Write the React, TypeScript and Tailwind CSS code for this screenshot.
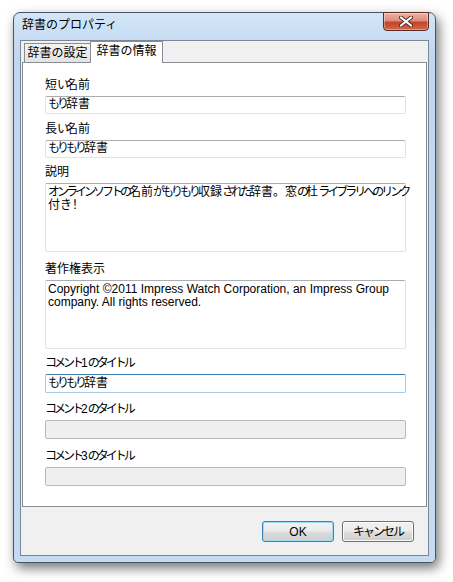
import React from 'react';

const jp = "font-['Liberation_Sans','Noto_Sans_CJK_JP',sans-serif]";

// kana are narrow in the original UI font, so squeeze each run of them
const Jp = ({ text, kana }: { text: string; kana: string }) => (
  <>
    {text
      .split(/([\u3040-\u30ff]+)/)
      .filter(Boolean)
      .map((part, i) =>
        /[\u3040-\u30ff]/.test(part) ? (
          <span key={i} className={kana}>
            {part}
          </span>
        ) : (
          <span key={i}>{part}</span>
        )
      )}
  </>
);

const Label = ({ text, className }: { text: string; className: string }) => (
  <div className={`${className} h-[15px] leading-[15px] text-[12px] text-black whitespace-nowrap`}>
    <Jp text={text} kana="tracking-[-3px]" />
  </div>
);

const TextBox = ({ value, state, className }: { value?: string; state: 'normal' | 'focused' | 'disabled'; className: string }) => {
  const look =
    state === 'focused'
      ? 'border-[#a6cae6] border-t-[#3d7bad] bg-white'
      : state === 'disabled'
      ? 'border-[#b7b9bc] bg-[#efefef]'
      : 'border-[#dfe2e7] border-t-[#abadb3] bg-white';
  return (
    <div className={`${className} mt-[3px] w-[361px] border rounded-[2px] ${look} pl-[2px] text-[12px] leading-[15px] text-black whitespace-nowrap`}>
      {value && <Jp text={value} kana="tracking-[-3px]" />}
    </div>
  );
};

const TextArea = ({ lines }: { lines: string[] }) => (
  <div className="mt-[3px] w-[361px] h-[69px] border rounded-[2px] border-[#dfe2e7] border-t-[#abadb3] bg-white px-[2px] pt-[2px] text-[12px] leading-[13px] text-black">
    {lines.map((l) => (
      <div key={l} className="whitespace-nowrap">
        <Jp text={l} kana="tracking-[-3px]" />
      </div>
    ))}
  </div>
);

const CloseButton = () => (
  <div className="w-[46px] h-[19px] -mt-px rounded-b-[4px] border border-[#5c2a22] bg-[linear-gradient(#eab3a6_0%,#dc8c78_45%,#c4432b_55%,#cf6a4a_100%)] flex items-center justify-center shadow-[inset_0_0_0_1px_rgba(255,255,255,0.35)]">
    <svg width="14" height="11" viewBox="0 0 14 11">
      <path d="M2 1.5 L12 9.5 M12 1.5 L2 9.5" stroke="#5a2a22" strokeWidth="4" strokeLinecap="round" />
      <path d="M2 1.5 L12 9.5 M12 1.5 L2 9.5" stroke="#ffffff" strokeWidth="2.2" strokeLinecap="round" />
    </svg>
  </div>
);

const Button = ({ text, primary }: { text: string; primary?: boolean }) => (
  <div
    className={`w-[72px] h-[21px] rounded-[3px] border flex items-center justify-center text-[12px] text-black bg-[linear-gradient(#f2f2f2_0%,#ebebeb_48%,#dddddd_52%,#cfcfcf_100%)] ${
      primary ? 'border-[#3c7fb1] shadow-[inset_0_0_0_1px_#9fdcf7]' : 'border-[#707070] shadow-[inset_0_0_0_1px_#fcfcfc]'
    }`}
  >
    <Jp text={text} kana="tracking-[-2px]" />
  </div>
);

export default function App() {
  return (
    <div className={`w-[453px] h-[582px] bg-white pt-[12px] pl-[13px] ${jp}`}>
      <div className="w-[423px] h-[551px] rounded-t-[7px] rounded-b-[5px] border border-[#4a5562] bg-[linear-gradient(#d3e5f8_0%,#bfd7f0_8%,#c3dbf3_100%)] shadow-[3px_5px_12px_rgba(0,0,0,0.55)] flex flex-col">
        {/* title bar */}
        <div className="h-[27px] flex items-start justify-between">
          <div className="pl-[8px] pt-[5px] text-[12px] leading-[15px] text-black">辞書のプロパティ</div>
          <div className="mr-[6px]">
            <CloseButton />
          </div>
        </div>

        {/* client area */}
        <div className="flex-1 ml-[6px] mr-[6px] mb-[6px] border border-[#7d8794] bg-[#f0f0f0] flex flex-col">
          <div className="ml-[1px] w-[405px] flex flex-col">
            {/* tabs */}
            <div className="h-[21px] flex items-end pl-[2px]">
              <div className="h-[19px] w-[67px] border border-b-0 border-[#898c95] bg-[linear-gradient(#f3f3f3,#e3e3e3)] text-[12px] leading-[18px] text-center text-black">
                辞書の設定
              </div>
              <div className="relative z-10 -mb-px h-[22px] w-[73px] -ml-px border border-b-0 border-[#898c95] bg-white text-[12px] leading-[18px] text-center text-black">
                辞書の情報
              </div>
            </div>

            {/* panel */}
            <div className="h-[445px] border border-[#898c95] bg-white pl-[22px]">
              <Label text="短い名前" className="mt-[15px]" />
              <TextBox value="もり辞書" state="normal" className="h-[18px]" />
              <Label text="長い名前" className="mt-[8px]" />
              <TextBox value="もりもり辞書" state="normal" className="h-[18px]" />
              <Label text="説明" className="mt-[7px]" />
              <TextArea lines={['オンラインソフトの名前がもりもり収録された辞書。窓の杜ライブラリへのリンク', '付き！']} />
              <Label text="著作権表示" className="mt-[10px]" />
              <TextArea lines={['Copyright ©2011 Impress Watch Corporation, an Impress Group', 'company. All rights reserved.']} />
              <Label text="コメント1のタイトル" className="mt-[7px]" />
              <TextBox value="もりもり辞書" state="focused" className="h-[19px] leading-[17px]" />
              <Label text="コメント2のタイトル" className="mt-[9px]" />
              <TextBox state="disabled" className="h-[19px]" />
              <Label text="コメント3のタイトル" className="mt-[10px]" />
              <TextBox state="disabled" className="h-[19px]" />
            </div>
          </div>

          {/* buttons */}
          <div className="mt-[14px] flex justify-end gap-[8px] pr-[14px]">
            <Button text="OK" primary />
            <Button text="キャンセル" />
          </div>
        </div>
      </div>
    </div>
  );
}
